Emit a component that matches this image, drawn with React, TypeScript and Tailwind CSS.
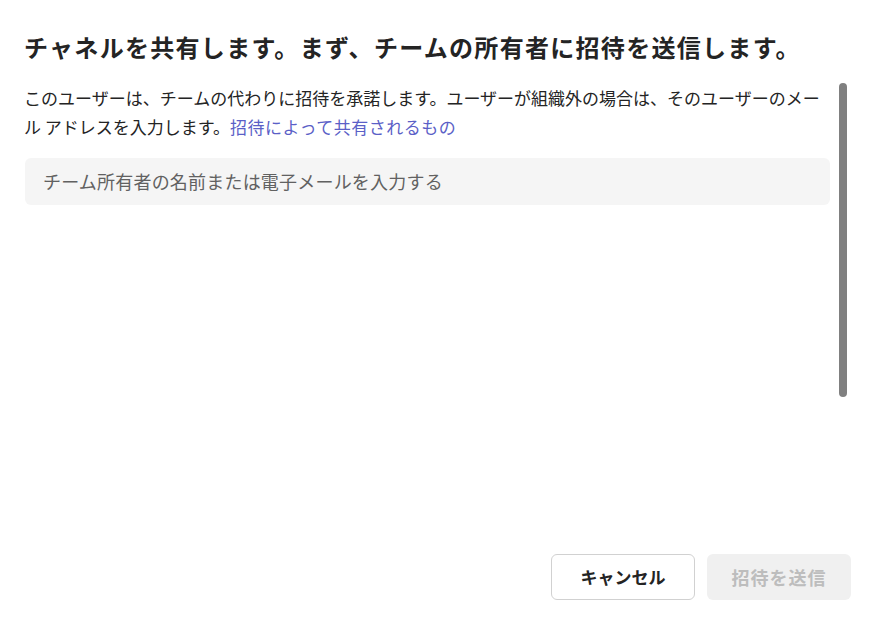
import React from "react";

const font = { fontFamily: '"Noto Sans CJK JP", "Noto Sans", sans-serif' };

const App: React.FC = () => {
  return (
    <div
      className="w-[871px] h-[632px] bg-white flex flex-col text-[#242424]"
      style={font}
    >
      {/* タイトル */}
      <h1 className="pl-6 pt-[31px] text-[24px] leading-[32px] font-bold tracking-[1.3px] text-[#242424]">
        チャネルを共有します。まず、チームの所有者に招待を送信します。
      </h1>

      {/* 本文 + スクロールバー */}
      <div className="flex mt-5 pl-6 pr-6 gap-[9px] flex-1 min-h-0">
        <div className="flex-1 min-w-0">
          <p className="text-[17px] leading-[29px] text-[#242424]">
            このユーザーは、チームの代わりに招待を承諾します。ユーザーが組織外の場合は、そのユーザーのメール アドレスを入力します。
            <a className="text-[#5b5fc7] tracking-[0.5px] cursor-pointer">招待によって共有されるもの</a>
          </p>
          <div className="mt-[17px] ml-px h-[47px] rounded-md bg-[#f5f5f5] flex items-center px-[18px]">
            <input
              type="text"
              placeholder="チーム所有者の名前または電子メールを入力する"
              className="w-full bg-transparent text-[18px] tracking-[0.2px] outline-none placeholder:text-[#616161]"
            />
          </div>
        </div>
        <div className="w-2 h-[314px] rounded-full bg-[#808080]" />
      </div>

      {/* フッター */}
      <div className="flex justify-end gap-3 pr-5 pb-[32px]">
        <button className="w-[144px] h-[46px] rounded-md border border-[#d1d1d1] bg-white text-[17px] font-bold text-[#242424]">
          キャンセル
        </button>
        <button className="w-[144px] h-[46px] rounded-md bg-[#f0f0f0] text-[18px] font-bold tracking-[1px] text-[#bdbdbd]">
          招待を送信
        </button>
      </div>
    </div>
  );
};

export default App;
